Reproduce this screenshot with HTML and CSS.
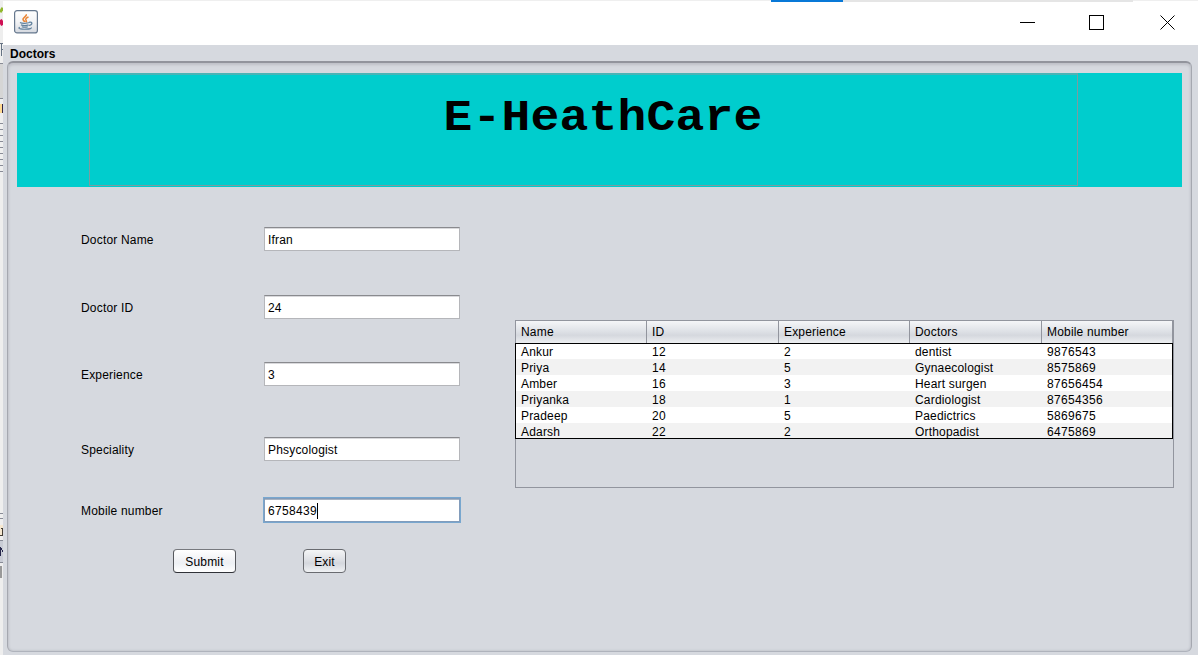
FILE: index.html
```html
<!DOCTYPE html>
<html lang="en">
<head>
<meta charset="utf-8">
<title>E-HeathCare</title>
<link rel="stylesheet" href="styles.css">
</head>
<body>
<div class="desktop">
  <svg class="behind" width="3" height="655" viewBox="0 0 3 655" aria-hidden="true" shape-rendering="crispEdges">
    <rect width="3" height="655" fill="#eeeeee"/>
    <path d="M0 12L3 8" stroke="#92b82d" stroke-width="3" shape-rendering="auto"/>
    <path d="M0 20L3 25" stroke="#cf1055" stroke-width="4" shape-rendering="auto"/>
    <path d="M0 43h3M1 43v13M1 49h2" stroke="#667384" fill="none"/>
    <rect y="63" width="3" height="35" fill="#d5d5d5"/>
    <path d="M0 63.500h3M0 98.500h3M0 123.500h3M0 129.500h3M0 135.500h3M0 141.500h3M0 147.500h3M0 153.500h3M0 159.500h3M0 165.500h3M0 171.500h3M0 513.500h3M0 518.500h3M0 540.500h3M0 562.500h3" stroke="#888b96"/>
    <rect y="104" width="2" height="9" fill="#ffda91"/>
    <path d="M2.500 104v9" stroke="#302447" stroke-width="1"/>
    <rect y="525" width="3" height="10" fill="#f5e7cf"/>
    <path d="M1 528.500h1.500v6M0 535.500h3" stroke="#443e35" fill="none"/>
    <rect y="541" width="3" height="21" fill="#c9ccd5"/>
    <path d="M.5 547v9M.5 547l2.500 5" stroke="#25264a" fill="none"/>
    <rect y="566" width="2" height="12" fill="#999"/>
  </svg>
  <div class="window">
    <div class="top-strip"><span class="strip-blue"></span><span class="strip-gray"></span></div>
    <header class="titlebar">
      <svg class="java" width="24" height="24" viewBox="0 0 24 24">
        <defs><linearGradient id="tile" x2="0" y2="1"><stop offset="0" stop-color="#fff"/><stop offset=".5" stop-color="#f3f4f6"/><stop offset="1" stop-color="#d4d8df"/></linearGradient></defs>
        <rect x=".6" y=".6" width="22.800" height="22.300" rx="2.500" fill="url(#tile)" stroke="#66788e" stroke-width="1.200"/>
        <path d="M12.300 4.200c.8 2.200-3.900 3.300-3.300 5.300.3 1 1.300 1.500 1.800 2.500M14.500 7.100c-2.200.8-3.300 1.800-2.500 3 .5.700.8 1.400 0 2.200" fill="none" stroke="#e98535" stroke-width="1.600"/>
        <path d="M6 12.600c1.500 1 7.500 1 9.300 0M15 12.300c4.300-.9 3.500 2.900-.2 3.200M7 14.900c2 .8 5.500.8 7.500 0M7.800 16.700c1.700.6 4.300.6 6 0M5.800 17.300c-3.200 1.500 3 2.100 6.200 1.900 4.200-.2 6-.9 5-1.700" fill="none" stroke="#61819d" stroke-width="1.200"/>
      </svg>
      <svg class="controls" width="156" height="16" viewBox="0 0 156 16" fill="none" stroke="#000" stroke-width="1">
        <path d="M0 7.500h15M69.500.5h14v14h-14z" shape-rendering="crispEdges"/>
        <path d="M140.500.5l14 14M154.500.5l-14 14"/>
      </svg>
    </header>
    <main class="content">
      <h2 class="group-title">Doctors</h2>
      <section class="panel">
        <div class="banner"><h1 class="banner-title"><span class="banner-text">E-HeathCare</span></h1></div>
        <div class="columns">
          <form class="form">
            <div class="row gap-44"><label class="label" for="name">Doctor Name</label><input class="field" id="name" value="Ifran"></div>
            <div class="row gap-43"><label class="label" for="id">Doctor ID</label><input class="field" id="id" value="24"></div>
            <div class="row gap-51"><label class="label" for="exp">Experience</label><input class="field" id="exp" value="3"></div>
            <div class="row gap-37"><label class="label" for="spec">Speciality</label><input class="field" id="spec" value="Phsycologist"></div>
            <div class="row gap-27"><label class="label">Mobile number</label><div class="field focused"><span class="digits">6758439</span><span class="caret"></span></div></div>
            <div class="buttons"><button type="button" class="button submit">Submit</button><button type="button" class="button exit">Exit</button></div>
          </form>
          <div class="scroll">
            <div class="line head"><span>Name</span><span>ID</span><span>Experience</span><span>Doctors</span><span>Mobile number</span></div>
            <div class="body">
              <div class="line"><span>Ankur</span><span class="digits">12</span><span>2</span><span>dentist</span><span class="digits">9876543</span></div>
              <div class="line"><span>Priya</span><span class="digits">14</span><span>5</span><span>Gynaecologist</span><span class="digits">8575869</span></div>
              <div class="line"><span>Amber</span><span class="digits">16</span><span>3</span><span>Heart surgen</span><span class="digits">87656454</span></div>
              <div class="line"><span>Priyanka</span><span class="digits">18</span><span>1</span><span>Cardiologist</span><span class="digits">87654356</span></div>
              <div class="line"><span>Pradeep</span><span class="digits">20</span><span>5</span><span>Paedictrics</span><span class="digits">5869675</span></div>
              <div class="line"><span>Adarsh</span><span class="digits">22</span><span>2</span><span>Orthopadist</span><span class="digits">6475869</span></div>
            </div>
          </div>
        </div>
      </section>
    </main>
  </div>
</div>
</body>
</html>
```
FILE: styles.css
```css
* { box-sizing: border-box; }
body {
  margin: 0;
  overflow: hidden;
  font: 12px/16px "Liberation Sans", Arial, sans-serif;
  letter-spacing: .18px;
  color: #000;
}
.desktop { display: flex; width: 1198px; height: 655px; }
.behind { flex: none; display: block; }
.window { flex: 1; display: flex; flex-direction: column; background: #d6d9df; }
.top-strip { display: flex; height: 2px; padding-left: 768px; background: linear-gradient(#efefef 1px, #fff 1px); }
.strip-blue { width: 72px; background: #0878d7; }
.strip-gray { width: 290px; background: #e5e5e5; }
.titlebar { display: flex; justify-content: space-between; height: 43px; padding: 8px 22px 0 11px; background: #fff; }
.java { display: block; }
.controls { display: block; margin-top: 5px; }
.content { flex: 1; display: flex; flex-direction: column; padding: 0 6px 3px 4px; }
.group-title { margin: 0; height: 16px; padding: 1px 0 0 3px; font-size: 12px; line-height: 16px; letter-spacing: 0; }
.panel {
  flex: 1;
  padding: 10px 9px 0;
  border: 1px solid #a5a8b0;
  border-top: 2px solid #92949c;
  border-bottom-color: #afb3bc;
  border-radius: 6px;
  box-shadow: inset 0 2px 3px #c0c2c9, inset 0 0 3px #b7bac2;
}
.banner { height: 114px; padding: 0 104px 0 72px; background: #00cdcd; }
.banner-title {
  height: 113px;
  margin: 0;
  padding: 15px 0 0 39px;
  border: 1px solid #7d9c9f;
  border-top: 2px solid #49b4b6;
  text-align: center;
  font: bold 48px/54px "Courier New", "Liberation Mono", monospace;
  letter-spacing: .2px;
}
.banner-text { display: inline-block; transform: scaleY(.92); transform-origin: 50% 75%; }
.columns { display: flex; align-items: flex-start; }
.form { width: 498px; padding: 40px 0 0 64px; }
.row { display: flex; align-items: center; height: 24px; }
.gap-44 { margin-bottom: 44px; }
.gap-43 { margin-bottom: 43px; }
.gap-51 { margin-bottom: 51px; }
.gap-37 { margin-bottom: 37px; }
.gap-27 { margin-bottom: 27px; }
.label { width: 183px; padding-top: 1px; }
.field {
  width: 196px;
  height: 24px;
  padding: 1px 3px 0;
  border: 1px solid #b5b6ba;
  border-top-color: #898a8e;
  background: #fff;
  box-shadow: inset 0 1px #d9d9dc;
  font: inherit;
  letter-spacing: inherit;
  outline: none;
}
.focused { display: flex; align-items: center; border-color: #829cbb; box-shadow: 0 0 0 1px #78a7cf, inset 0 1px #a8b3c2; }
.digits { letter-spacing: .33px; }
.caret { width: 1px; height: 16px; background: #000; }
.buttons { display: flex; gap: 67px; padding-left: 92px; }
.button {
  height: 24px;
  padding: 2px 0 0;
  border: 1px solid #696b70;
  border-radius: 4px;
  font: inherit;
  letter-spacing: inherit;
  color: #000;
}
.submit { width: 63px; border-color: #77797e #55575c #303238; background: linear-gradient(#fff, #f1f2f5 45%, #edf0f4 60%, #fff); }
.exit { width: 43px; background: linear-gradient(#f4f5f6, #dee0e5 45%, #d4d7dd 60%, #eff1f3); }
.scroll { width: 659px; height: 168px; margin-top: 133px; border: 1px solid #92959e; }
.line { display: grid; grid-template-columns: 131px 132px 131px 132px 131px; height: 16px; background: #fff; }
.line span { padding-left: 5px; line-height: 18px; white-space: nowrap; }
.head { height: 22px; background: linear-gradient(#f5f6f8, #dfe2e7 45%, #d5d8de 65%, #eceef1); }
.head span { padding-top: 2px; border-right: 1px solid #92959e; }
.body { width: 658px; height: 96px; margin-left: -1px; border: 1px solid #000; }
.body .line:nth-child(even) { background: #f2f2f2; }
.body .line:first-child, .body .line:last-child { height: 15px; }
.body .line:first-child span { line-height: 16px; }
```
